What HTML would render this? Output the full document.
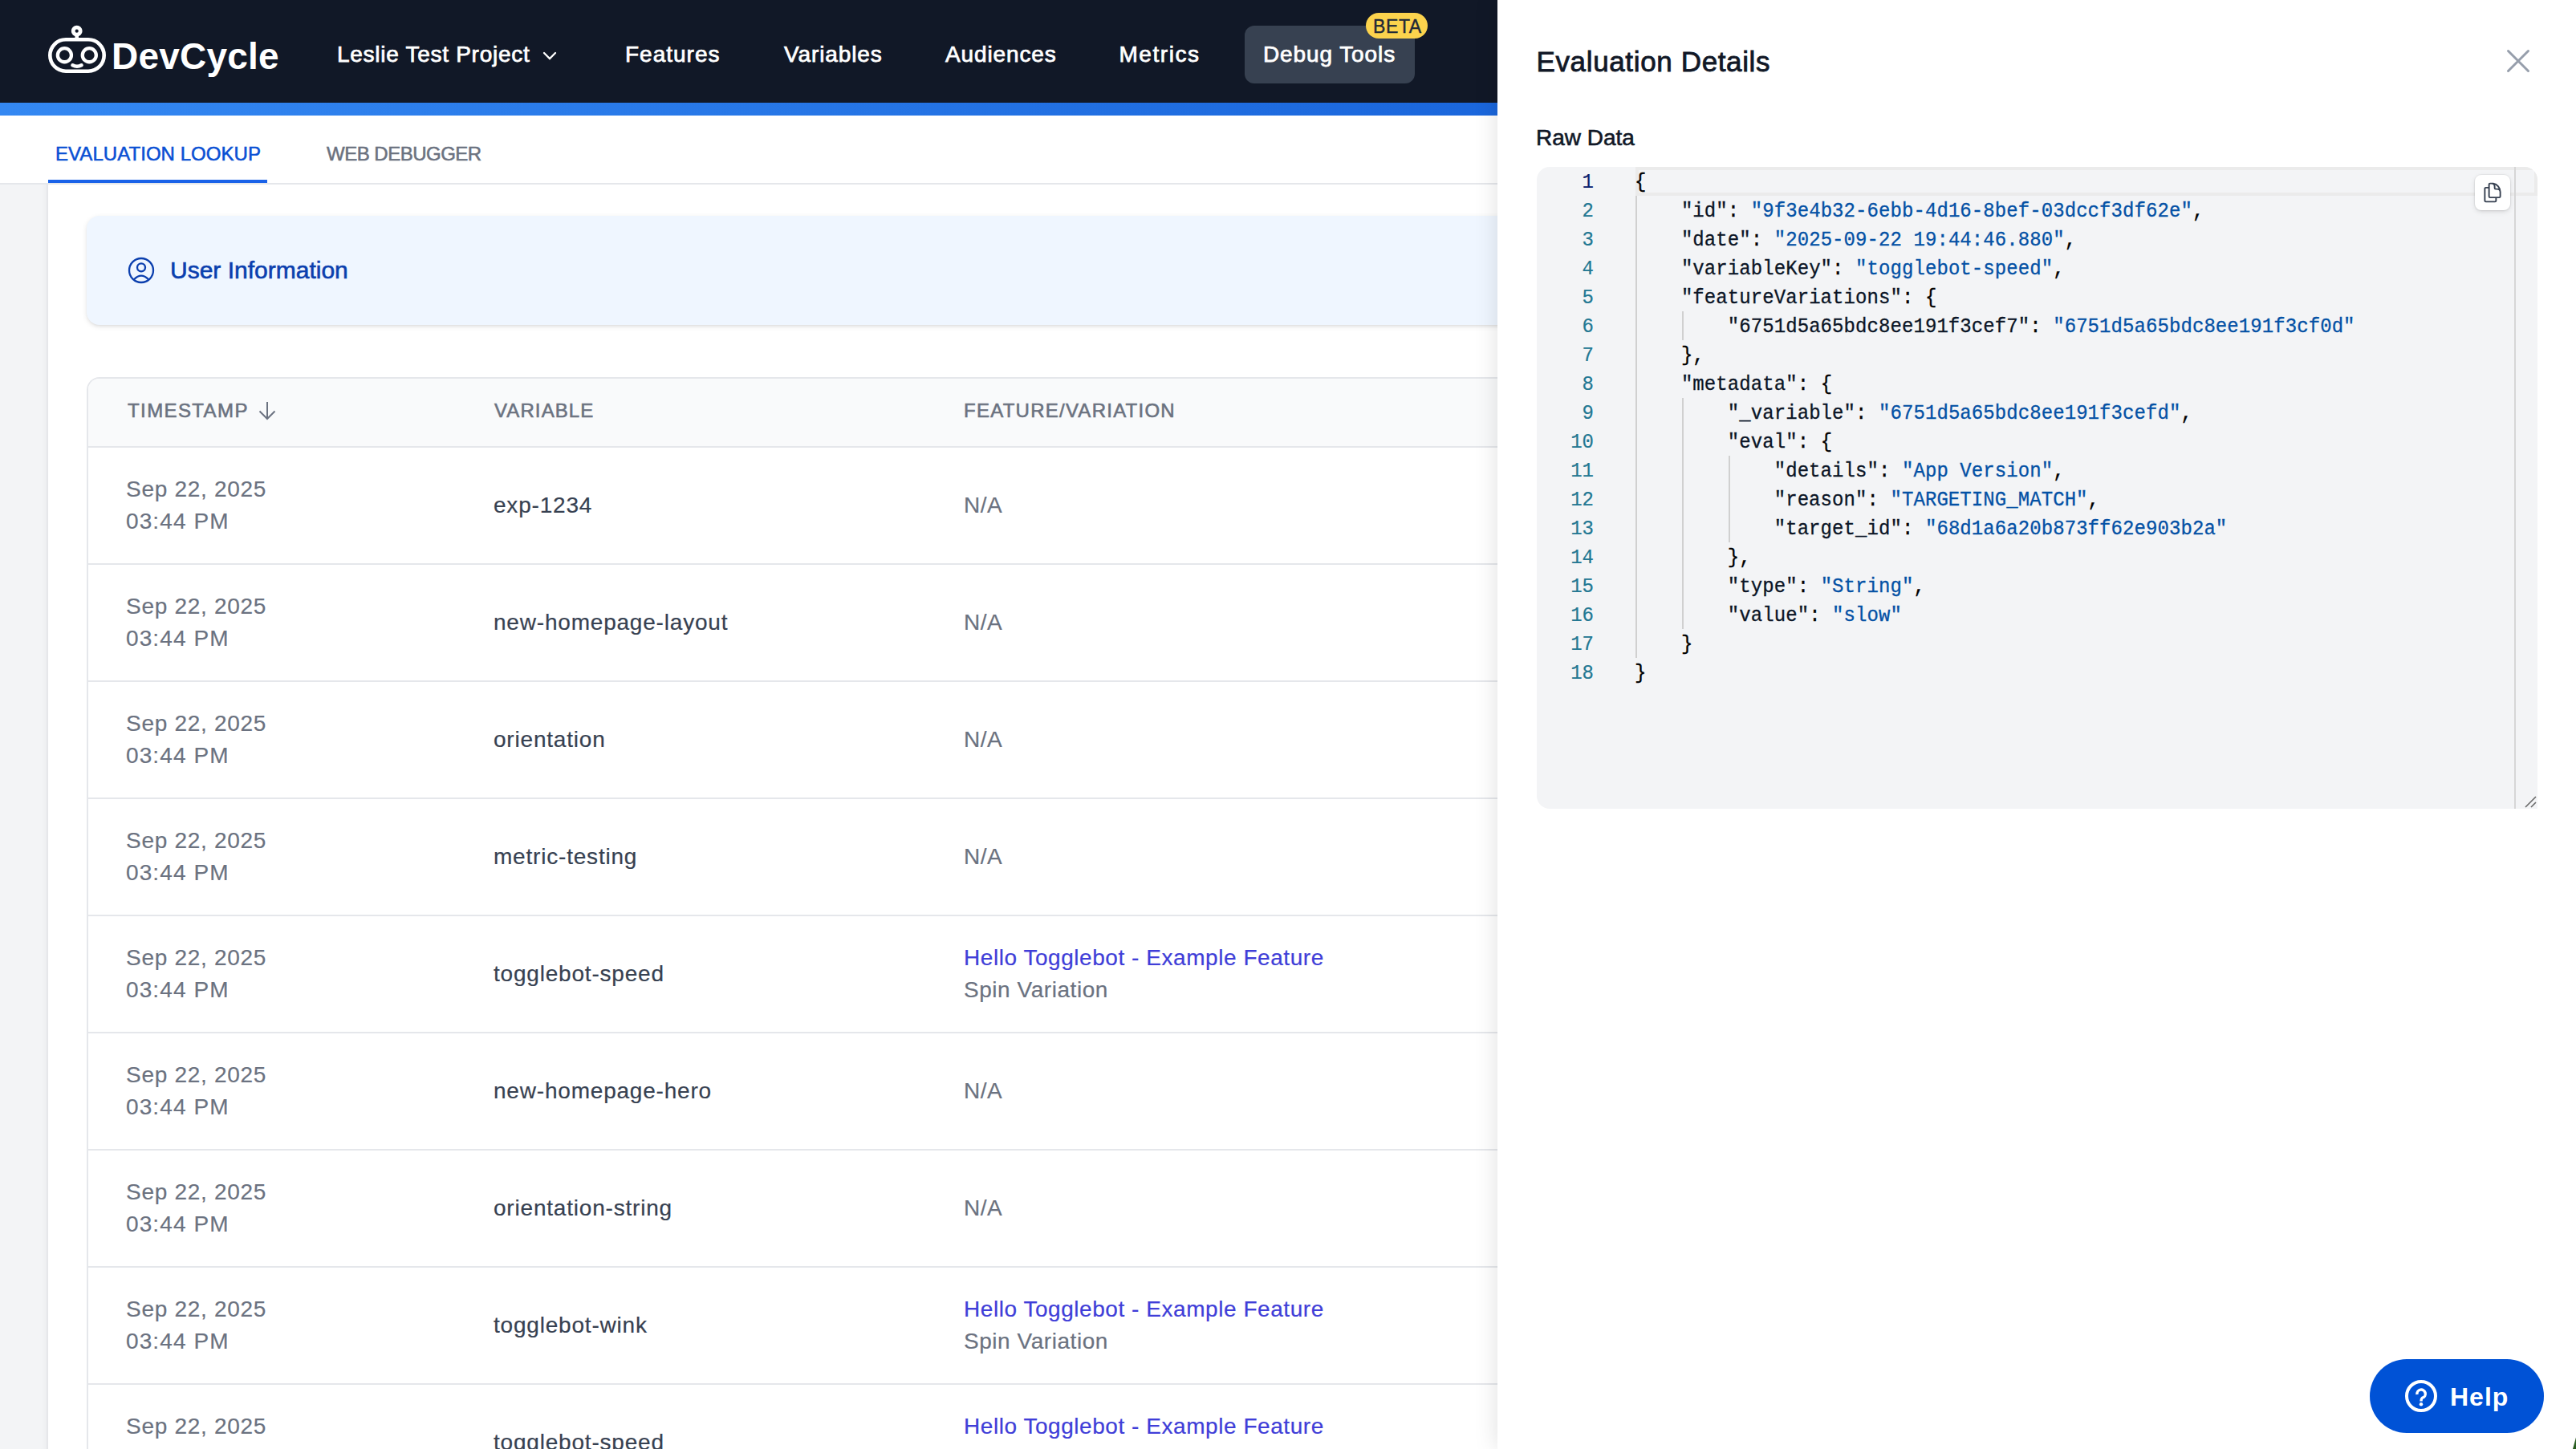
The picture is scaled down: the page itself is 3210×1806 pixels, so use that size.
<!DOCTYPE html>
<html><head><meta charset="utf-8"><title>DevCycle</title>
<style>
*{box-sizing:border-box;margin:0;padding:0}
html,body{width:3210px;height:1806px;overflow:hidden;background:#fff}
body{position:relative;font-family:"Liberation Sans",sans-serif;}
.abs{position:absolute;white-space:nowrap}
.hdr{position:absolute;left:0;top:0;width:3210px;height:128px;background:#111827}
.bar{position:absolute;left:0;top:128px;width:3210px;height:16px;background:linear-gradient(90deg,#3488f2 0%,#084ecc 100%)}
.nav{position:absolute;top:48px;font-size:28px;line-height:40px;font-weight:400;color:#fff;white-space:nowrap;-webkit-text-stroke:0.75px #fff}
.tabs{position:absolute;left:0;top:144px;width:3210px;height:86px;background:#fff;border-bottom:2px solid #e5e7eb}
.tab{position:absolute;top:172px;font-size:24px;line-height:40px;letter-spacing:0.3px;white-space:nowrap;-webkit-text-stroke:0.55px currentColor}
.strip{position:absolute;left:0;top:230px;width:60px;height:1576px;background:#f3f4f6;border-right:2px solid #e6e7ea;box-shadow:inset -8px 0 8px -8px rgba(0,0,0,0.05)}
.card{position:absolute;left:108px;top:269px;width:2000px;height:136px;background:#eff6ff;border-radius:16px;box-shadow:0 2px 6px rgba(0,0,0,0.1),0 2px 4px -2px rgba(0,0,0,0.1)}
.tbl{position:absolute;left:108px;top:470px;width:2000px;height:1400px;border:2px solid #e5e7eb;border-right:none;border-radius:16px 0 0 0;background:#fff}
.th{position:absolute;left:0;top:0;width:2000px;height:86px;background:#f9fafb;border-bottom:2px solid #e5e7eb;border-radius:14px 0 0 0}
.hl{position:absolute;font-size:24px;line-height:40px;color:#6b7280;letter-spacing:1.2px;white-space:nowrap;-webkit-text-stroke:0.6px #6b7280}
.row{position:absolute;left:0;width:2000px;height:146px;border-bottom:2px solid #e5e7eb}
.c{position:absolute;font-size:28px;line-height:40px;white-space:nowrap;-webkit-text-stroke:0.2px currentColor}
.g{color:#6b7280}.d{color:#374151}.lk{color:#403ed8}
.drawer{position:absolute;left:1866px;top:0;width:1344px;height:1806px;background:#fff;box-shadow:0 0 28px rgba(0,0,0,0.13)}
.ed{position:absolute;left:1915px;top:208px;width:1247px;height:800px;background:#f3f4f6;border-radius:16px 16px 0 16px;overflow:hidden}
.ln{position:absolute;font-family:"Liberation Mono",monospace;font-size:24px;line-height:36px;color:#237893;text-align:right;width:80px;white-space:pre;transform-origin:0 24px;transform:scaleY(1.08);-webkit-text-stroke:0.2px currentColor}
.cl{position:absolute;font-family:"Liberation Mono",monospace;font-size:24px;line-height:36px;white-space:pre;color:#000;letter-spacing:0.075px;-webkit-text-stroke:0.3px currentColor;transform-origin:0 24px;transform:scaleY(1.11)}
.k{color:#0b1526}.s{color:#0451a5}.p{color:#000}
.gd{position:absolute;width:2px;background:#d3d3d3}
</style></head><body>

<div class="hdr"></div><div class="bar"></div>
<svg class="abs" style="left:56px;top:28px" width="80" height="72" viewBox="0 0 80 72">
<g fill="none" stroke="#fff" stroke-width="4.6">
<rect x="6.3" y="21.3" width="67.4" height="39.4" rx="19.7" ry="19.7"/>
<circle cx="24.4" cy="40.7" r="8.55" stroke-width="4.3"/>
<circle cx="55.3" cy="40.7" r="8.55" stroke-width="4.3"/>
<circle cx="39.7" cy="10.7" r="4.5" stroke-width="4.8"/>
<line x1="39.7" y1="15" x2="39.7" y2="21"/>
<path d="M34.5 53.3 Q40 56.3 45.5 53.3" stroke-linecap="round"/>
</g></svg>
<div class="abs" style="left:139px;top:38px;font-size:46px;line-height:64px;font-weight:700;color:#fff;letter-spacing:0.2px">DevCycle</div>
<div class="nav" style="left:420px;letter-spacing:0.72px">Leslie Test Project</div>
<svg class="abs" style="left:674px;top:62px" width="22" height="16" viewBox="0 0 22 16"><path d="M4 4 L11 11 L18 4" fill="none" stroke="#fff" stroke-width="2.3" stroke-linecap="round"/></svg>
<div class="nav" style="left:779px;letter-spacing:1.0px">Features</div>
<div class="nav" style="left:977px;letter-spacing:0.88px">Variables</div>
<div class="nav" style="left:1178px;letter-spacing:0.88px">Audiences</div>
<div class="nav" style="left:1394.5px;letter-spacing:1.55px">Metrics</div>
<div class="abs" style="left:1551px;top:32px;width:212px;height:72px;background:#374151;border-radius:12px"></div>
<div class="nav" style="left:1574px;letter-spacing:0.9px">Debug Tools</div>
<div class="abs" style="left:1702px;top:16px;width:77px;height:32px;background:#fcd34d;border-radius:16px"></div>
<div class="abs" style="left:1711px;top:17px;font-size:23px;line-height:32px;color:#1f2937;letter-spacing:0.6px;-webkit-text-stroke:0.4px #1f2937">BETA</div>
<div class="tabs"></div>
<div class="tab" style="left:69px;color:#0a50d4;letter-spacing:0.05px">EVALUATION LOOKUP</div>
<div class="abs" style="left:60px;top:224px;width:273px;height:4px;background:#1a62e8"></div>
<div class="tab" style="left:407px;color:#6b7280;letter-spacing:-0.5px">WEB DEBUGGER</div>
<div class="strip"></div>
<div class="card"></div>
<svg class="abs" style="left:156px;top:317px" width="40" height="40" viewBox="0 0 40 40"><g fill="none" stroke="#0b3fae" stroke-width="2.3">
<circle cx="20" cy="20" r="15"/><circle cx="20" cy="16.3" r="5"/><path d="M11 31.3 Q20 22 29 31.3"/></g></svg>
<div class="abs" style="left:212px;top:317px;font-size:30px;line-height:40px;color:#0b3fae;-webkit-text-stroke:0.6px #0b3fae">User Information</div>
<div class="tbl"><div class="th"></div>
<div class="row" style="top:86px"></div>
<div class="row" style="top:232px"></div>
<div class="row" style="top:378px"></div>
<div class="row" style="top:524px"></div>
<div class="row" style="top:670px"></div>
<div class="row" style="top:816px"></div>
<div class="row" style="top:962px"></div>
<div class="row" style="top:1108px"></div>
<div class="row" style="top:1254px"></div>
</div>
<div class="hl" style="left:159px;top:492px;letter-spacing:1.4px">TIMESTAMP</div>
<svg class="abs" style="left:318px;top:498px" width="30" height="28" viewBox="0 0 30 28"><path d="M15 3 V24.5 M5.5 14.5 L15 24 L24.5 14.5" fill="none" stroke="#6b7280" stroke-width="2"/></svg>
<div class="hl" style="left:616px;top:492px;letter-spacing:1.1px">VARIABLE</div>
<div class="hl" style="left:1201px;top:492px;letter-spacing:1.25px">FEATURE/VARIATION</div>
<div class="c g" style="left:157px;top:590px;letter-spacing:0.7px">Sep 22, 2025<br><span style="letter-spacing:1.1px">03:44 PM</span></div>
<div class="c d" style="left:615px;top:610px;letter-spacing:0.8px">exp-1234</div>
<div class="c g" style="left:1201px;top:610px;letter-spacing:0.55px">N/A</div>
<div class="c g" style="left:157px;top:736px;letter-spacing:0.7px">Sep 22, 2025<br><span style="letter-spacing:1.1px">03:44 PM</span></div>
<div class="c d" style="left:615px;top:756px;letter-spacing:0.8px">new-homepage-layout</div>
<div class="c g" style="left:1201px;top:756px;letter-spacing:0.55px">N/A</div>
<div class="c g" style="left:157px;top:882px;letter-spacing:0.7px">Sep 22, 2025<br><span style="letter-spacing:1.1px">03:44 PM</span></div>
<div class="c d" style="left:615px;top:902px;letter-spacing:0.8px">orientation</div>
<div class="c g" style="left:1201px;top:902px;letter-spacing:0.55px">N/A</div>
<div class="c g" style="left:157px;top:1028px;letter-spacing:0.7px">Sep 22, 2025<br><span style="letter-spacing:1.1px">03:44 PM</span></div>
<div class="c d" style="left:615px;top:1048px;letter-spacing:0.8px">metric-testing</div>
<div class="c g" style="left:1201px;top:1048px;letter-spacing:0.55px">N/A</div>
<div class="c g" style="left:157px;top:1174px;letter-spacing:0.7px">Sep 22, 2025<br><span style="letter-spacing:1.1px">03:44 PM</span></div>
<div class="c d" style="left:615px;top:1194px;letter-spacing:0.8px">togglebot-speed</div>
<div class="c" style="left:1201px;top:1174px;letter-spacing:0.55px"><span class="lk">Hello Togglebot - Example Feature</span><br><span class="g">Spin Variation</span></div>
<div class="c g" style="left:157px;top:1320px;letter-spacing:0.7px">Sep 22, 2025<br><span style="letter-spacing:1.1px">03:44 PM</span></div>
<div class="c d" style="left:615px;top:1340px;letter-spacing:0.8px">new-homepage-hero</div>
<div class="c g" style="left:1201px;top:1340px;letter-spacing:0.55px">N/A</div>
<div class="c g" style="left:157px;top:1466px;letter-spacing:0.7px">Sep 22, 2025<br><span style="letter-spacing:1.1px">03:44 PM</span></div>
<div class="c d" style="left:615px;top:1486px;letter-spacing:0.8px">orientation-string</div>
<div class="c g" style="left:1201px;top:1486px;letter-spacing:0.55px">N/A</div>
<div class="c g" style="left:157px;top:1612px;letter-spacing:0.7px">Sep 22, 2025<br><span style="letter-spacing:1.1px">03:44 PM</span></div>
<div class="c d" style="left:615px;top:1632px;letter-spacing:0.8px">togglebot-wink</div>
<div class="c" style="left:1201px;top:1612px;letter-spacing:0.55px"><span class="lk">Hello Togglebot - Example Feature</span><br><span class="g">Spin Variation</span></div>
<div class="c g" style="left:157px;top:1758px;letter-spacing:0.7px">Sep 22, 2025<br><span style="letter-spacing:1.1px">03:44 PM</span></div>
<div class="c d" style="left:615px;top:1778px;letter-spacing:0.8px">togglebot-speed</div>
<div class="c" style="left:1201px;top:1758px;letter-spacing:0.55px"><span class="lk">Hello Togglebot - Example Feature</span><br><span class="g">Spin Variation</span></div>
<div class="drawer"></div>
<div class="abs" style="left:1914.5px;top:55px;font-size:35px;line-height:44px;color:#111827;letter-spacing:0.64px;-webkit-text-stroke:0.8px #111827">Evaluation Details</div>
<svg class="abs" style="left:3117px;top:55px" width="42" height="42" viewBox="0 0 42 42"><path d="M8.5 8.5 L33.5 33.5 M33.5 8.5 L8.5 33.5" fill="none" stroke="#969eab" stroke-width="3" stroke-linecap="round"/></svg>
<div class="abs" style="left:1914px;top:154px;font-size:28px;line-height:36px;color:#111827;-webkit-text-stroke:0.6px #111827">Raw Data</div>
<div class="ed">
<div class="abs" style="left:123px;top:0px;width:1124px;height:36px;border:4px solid #ebebeb"></div>
<div class="gd" style="left:123.0px;top:36px;height:576px;background:#d0d0d0"></div>
<div class="gd" style="left:180.9px;top:180px;height:36px;background:#d0d0d0"></div>
<div class="gd" style="left:180.9px;top:288px;height:288px;background:#d0d0d0"></div>
<div class="gd" style="left:238.8px;top:360px;height:108px;background:#d0d0d0"></div>
<div class="ln" style="left:-9px;top:2px;color:#0b216f">1</div>
<div class="cl" style="left:122.0px;top:2px"><span class="p">{</span></div>
<div class="ln" style="left:-9px;top:38px;color:#237893">2</div>
<div class="cl" style="left:179.9px;top:38px"><span class="k">&quot;id&quot;</span><span class="p">: </span><span class="s">&quot;9f3e4b32-6ebb-4d16-8bef-03dccf3df62e&quot;</span><span class="p">,</span></div>
<div class="ln" style="left:-9px;top:74px;color:#237893">3</div>
<div class="cl" style="left:179.9px;top:74px"><span class="k">&quot;date&quot;</span><span class="p">: </span><span class="s">&quot;2025-09-22 19:44:46.880&quot;</span><span class="p">,</span></div>
<div class="ln" style="left:-9px;top:110px;color:#237893">4</div>
<div class="cl" style="left:179.9px;top:110px"><span class="k">&quot;variableKey&quot;</span><span class="p">: </span><span class="s">&quot;togglebot-speed&quot;</span><span class="p">,</span></div>
<div class="ln" style="left:-9px;top:146px;color:#237893">5</div>
<div class="cl" style="left:179.9px;top:146px"><span class="k">&quot;featureVariations&quot;</span><span class="p">: {</span></div>
<div class="ln" style="left:-9px;top:182px;color:#237893">6</div>
<div class="cl" style="left:237.8px;top:182px"><span class="k">&quot;6751d5a65bdc8ee191f3cef7&quot;</span><span class="p">: </span><span class="s">&quot;6751d5a65bdc8ee191f3cf0d&quot;</span></div>
<div class="ln" style="left:-9px;top:218px;color:#237893">7</div>
<div class="cl" style="left:179.9px;top:218px"><span class="p">},</span></div>
<div class="ln" style="left:-9px;top:254px;color:#237893">8</div>
<div class="cl" style="left:179.9px;top:254px"><span class="k">&quot;metadata&quot;</span><span class="p">: {</span></div>
<div class="ln" style="left:-9px;top:290px;color:#237893">9</div>
<div class="cl" style="left:237.8px;top:290px"><span class="k">&quot;_variable&quot;</span><span class="p">: </span><span class="s">&quot;6751d5a65bdc8ee191f3cefd&quot;</span><span class="p">,</span></div>
<div class="ln" style="left:-9px;top:326px;color:#237893">10</div>
<div class="cl" style="left:237.8px;top:326px"><span class="k">&quot;eval&quot;</span><span class="p">: {</span></div>
<div class="ln" style="left:-9px;top:362px;color:#237893">11</div>
<div class="cl" style="left:295.7px;top:362px"><span class="k">&quot;details&quot;</span><span class="p">: </span><span class="s">&quot;App Version&quot;</span><span class="p">,</span></div>
<div class="ln" style="left:-9px;top:398px;color:#237893">12</div>
<div class="cl" style="left:295.7px;top:398px"><span class="k">&quot;reason&quot;</span><span class="p">: </span><span class="s">&quot;TARGETING_MATCH&quot;</span><span class="p">,</span></div>
<div class="ln" style="left:-9px;top:434px;color:#237893">13</div>
<div class="cl" style="left:295.7px;top:434px"><span class="k">&quot;target_id&quot;</span><span class="p">: </span><span class="s">&quot;68d1a6a20b873ff62e903b2a&quot;</span></div>
<div class="ln" style="left:-9px;top:470px;color:#237893">14</div>
<div class="cl" style="left:237.8px;top:470px"><span class="p">},</span></div>
<div class="ln" style="left:-9px;top:506px;color:#237893">15</div>
<div class="cl" style="left:237.8px;top:506px"><span class="k">&quot;type&quot;</span><span class="p">: </span><span class="s">&quot;String&quot;</span><span class="p">,</span></div>
<div class="ln" style="left:-9px;top:542px;color:#237893">16</div>
<div class="cl" style="left:237.8px;top:542px"><span class="k">&quot;value&quot;</span><span class="p">: </span><span class="s">&quot;slow&quot;</span></div>
<div class="ln" style="left:-9px;top:578px;color:#237893">17</div>
<div class="cl" style="left:179.9px;top:578px"><span class="p">}</span></div>
<div class="ln" style="left:-9px;top:614px;color:#237893">18</div>
<div class="cl" style="left:122.0px;top:614px"><span class="p">}</span></div>
<div class="abs" style="left:1218px;top:0px;width:2px;height:800px;background:#d6d6d6"></div>
<div class="abs" style="left:1169px;top:10px;width:44px;height:44px;background:#fff;border-radius:8px;box-shadow:0 0 1px 1px rgba(0,0,0,0.05),0 2px 6px rgba(0,0,0,0.1),0 2px 4px -2px rgba(0,0,0,0.1)"></div>
<svg class="abs" style="left:1176.6999999999998px;top:18px" width="28" height="28" viewBox="0 0 24 24"><path fill="none" stroke="#374151" stroke-width="1.65" stroke-linecap="round" stroke-linejoin="round" d="M15.75 17.25v3.375c0 .621-.504 1.125-1.125 1.125h-9.75a1.125 1.125 0 01-1.125-1.125V7.875c0-.621.504-1.125 1.125-1.125H6.750a9.06 9.06 0 011.5.124m7.5 10.376h3.375c.621 0 1.125-.504 1.125-1.125V11.25c0-4.46-3.243-8.161-7.5-8.876a9.06 9.06 0 00-1.5-.124H9.375c-.621 0-1.125.504-1.125 1.125v3.5m7.5 10.375H9.375a1.125 1.125 0 01-1.125-1.125v-9.25m12 6.625v-1.875a3.375 3.375 0 00-3.375-3.375h-1.5a1.125 1.125 0 01-1.125-1.125v-1.5a3.375 3.375 0 00-3.375-3.375H9.750"/></svg>
<svg class="abs" style="left:1227px;top:780px" width="20" height="20" viewBox="0 0 20 20"><path d="M5 18 L18 5 M12 18 L18 12" stroke="#6a6a6a" stroke-width="1.6"/></svg>
</div>
<div class="abs" style="left:2953px;top:1694px;width:217px;height:92px;background:#0052d6;border-radius:46px"></div>
<svg class="abs" style="left:2995px;top:1718px" width="44" height="44" viewBox="0 0 44 44"><g fill="none" stroke="#fff" stroke-width="4"><circle cx="22" cy="22" r="18"/>
<path d="M17 20 A5.2 5.2 0 1 1 23.6 24.2 C22.2 25.2 22 26.5 22 28.5" stroke-width="3.4"/></g><circle cx="22" cy="32.3" r="2.2" fill="#fff"/></svg>
<div class="abs" style="left:3053px;top:1721px;font-size:32px;line-height:40px;font-weight:700;color:#fff;letter-spacing:1px">Help</div>
<div class="abs" style="left:3200px;top:1790px;width:10px;height:16px;background:#2a5e22;clip-path:polygon(60% 100%,100% 10%,100% 100%)"></div>
</body></html>
